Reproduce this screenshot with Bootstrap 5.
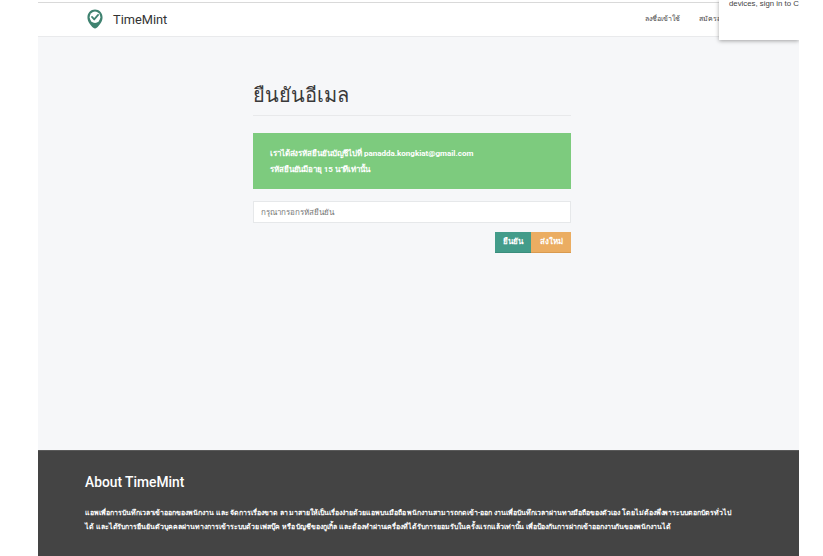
<!DOCTYPE html>
<html lang="th"><head><meta charset="utf-8">
<title>TimeMint</title>
<link href="https://cdn.jsdelivr.net/npm/bootstrap@5.3.0/dist/css/bootstrap.min.css" rel="stylesheet">
<style>
html,body{height:556px;overflow:hidden;background:#fff}
body{font-family:Roboto,"Noto Sans","Liberation Sans",sans-serif;color:#333}
.pageframe{margin-left:38px;width:761px;height:556px;position:relative;overflow:hidden;display:flex;flex-direction:column;background:#f6f7f9}
.topbar{height:37px;background:#fff;border-top:2px solid #fff;border-bottom:1px solid #e9eaec;padding:1px 0 0 49px;flex:none;box-shadow:inset 0 1px 0 #d9d9d9}
.topbar svg{margin-bottom:2px}
.brandname{font-size:12.8px;color:#333;margin-left:10px}
.navlinks{font-size:7px;color:#444;gap:19px;margin-left:auto;padding-right:60px}
.mainpane{flex:1;padding:46px 0 0 215px}
.formbox{width:318px}
.pagetitle{font-size:20px;font-weight:500;line-height:25px;margin:0;padding-bottom:7px;border-bottom:1px solid #e8e9eb;color:#3a3a3a}
.okbox{background:#7dcb7e;color:#fff;font-size:8px;font-weight:700;height:56px;margin-top:17px;padding:13px 17px;line-height:16px;letter-spacing:-.1px}
.mailaddr{letter-spacing:0}
.codeinput.form-control{height:22px;margin-top:12px;font-size:8px;border:1px solid #e6e8ea;border-radius:0;padding:0 7px;box-shadow:none}
.codeinput::placeholder{color:#777}
.actbtn{height:21px;border:0;border-radius:0;font-size:8px;font-weight:700;color:#fff;padding:0;margin-top:9px}
.actbtn.btnmint{width:36px;background:#439c8a;border-bottom:1px solid #3a8d7c}
.actbtn.btnamber{width:40px;background:#ebad62;border-bottom:1px solid #d99a4f}
.footerpane{height:106px;flex:none;background:#444;border-top:1px solid #5a5a5a;color:#fff;padding:21px 0 0 47px}
.footerhead{font-size:13.8px;font-weight:500;line-height:20px;margin:0 0 14px}
.footertext{font-size:7px;font-weight:700;line-height:14px;margin:0;white-space:nowrap;letter-spacing:-.03px}
.chromepop{position:absolute;top:0;right:0;width:80px;height:40px;background:#fff;box-shadow:0 1px 4px rgba(0,0,0,.35);font-size:7.8px;line-height:7px;padding-left:10px;white-space:nowrap;color:#444;font-family:"Liberation Sans",sans-serif}
</style></head>
<body>
<div class="pageframe">
<nav class="topbar d-flex align-items-center">
<svg width="16" height="20" viewBox="0 0 18 21" preserveAspectRatio="none" aria-hidden="true"><path d="M9 .5C4.200 .5.500 4.200.500 8.800c0 4.600 3.600 8 6.600 11 1 1 2.800 1 3.800 0 3-3 6.600-6.400 6.600-11C17.500 4.200 13.800.5 9 .5z" fill="#3f8270"/><circle cx="9" cy="8.600" r="6" fill="#fff"/><path d="M5.600 8.300l2.500 2.600 4.400-4.700" fill="none" stroke="#3f8270" stroke-width="2" stroke-linecap="round" stroke-linejoin="round"/></svg>
<span class="brandname">TimeMint</span>
<div class="navlinks d-flex"><span>ลงชื่อเข้าใช้</span><span>สมัครสมาชิก</span></div>
</nav>
<main class="mainpane">
<div class="formbox">
<h1 class="pagetitle">ยืนยันอีเมล</h1>
<div class="okbox">เราได้ส่งรหัสยืนยันบัญชีไปที่ <span class="mailaddr">panadda.kongkiat@gmail.com</span><br>รหัสยืนยันมีอายุ 15 นาทีเท่านั้น</div>
<input class="form-control codeinput" placeholder="กรุณากรอกรหัสยืนยัน">
<div class="d-flex justify-content-end">
<button class="btn actbtn btnmint">ยืนยัน</button><button class="btn actbtn btnamber">ส่งใหม่</button>
</div>
</div>
</main>
<footer class="footerpane">
<h2 class="footerhead">About TimeMint</h2>
<p class="footertext">แอพเพื่อการบันทึกเวลาเข้าออกของพนักงาน และ จัดการเรื่องขาด ลา มาสายให้เป็นเรื่องง่ายด้วยแอพบนมือถือ พนักงานสามารถกดเข้า-ออก งานเพื่อบันทึกเวลาผ่านทางมือถือของตัวเอง โดยไม่ต้องพึ่งพาระบบตอกบัตรทั่วไป<br>ได้ และได้รับการยืนยันตัวบุคคลผ่านทางการเข้าระบบด้วย เฟสบุ๊ค หรือ บัญชีของกูเกิ้ล และต้องทำผ่านเครื่องที่ได้รับการยอมรับในครั้งแรกแล้วเท่านั้น เพื่อป้องกันการฝากเข้าออกงานกันของพนักงานได้</p>
</footer>
<div class="chromepop">devices, sign in to C</div>
</div>
</body></html>
